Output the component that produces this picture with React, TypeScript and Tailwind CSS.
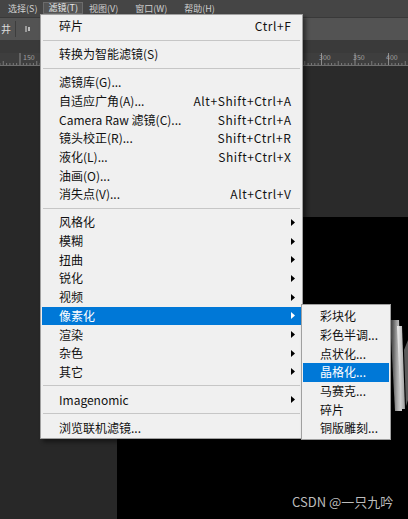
import React from "react";

type Item =
  | { kind: "sep" }
  | { kind: "item"; label: string; shortcut?: string; sub?: boolean; active?: boolean };

const FONT = { fontFamily: '"Noto Sans CJK SC", "Noto Sans", sans-serif' };

const filterMenu: Item[] = [
  { kind: "item", label: "碎片", shortcut: "Ctrl+F" },
  { kind: "sep" },
  { kind: "item", label: "转换为智能滤镜(S)" },
  { kind: "sep" },
  { kind: "item", label: "滤镜库(G)..." },
  { kind: "item", label: "自适应广角(A)...", shortcut: "Alt+Shift+Ctrl+A" },
  { kind: "item", label: "Camera Raw 滤镜(C)...", shortcut: "Shift+Ctrl+A" },
  { kind: "item", label: "镜头校正(R)...", shortcut: "Shift+Ctrl+R" },
  { kind: "item", label: "液化(L)...", shortcut: "Shift+Ctrl+X" },
  { kind: "item", label: "油画(O)..." },
  { kind: "item", label: "消失点(V)...", shortcut: "Alt+Ctrl+V" },
  { kind: "sep" },
  { kind: "item", label: "风格化", sub: true },
  { kind: "item", label: "模糊", sub: true },
  { kind: "item", label: "扭曲", sub: true },
  { kind: "item", label: "锐化", sub: true },
  { kind: "item", label: "视频", sub: true },
  { kind: "item", label: "像素化", sub: true, active: true },
  { kind: "item", label: "渲染", sub: true },
  { kind: "item", label: "杂色", sub: true },
  { kind: "item", label: "其它", sub: true },
  { kind: "sep" },
  { kind: "item", label: "Imagenomic", sub: true },
  { kind: "sep" },
  { kind: "item", label: "浏览联机滤镜..." },
];

const pixelateMenu = ["彩块化", "彩色半调...", "点状化...", "晶格化...", "马赛克...", "碎片", "铜版雕刻..."];

function Arrow({ white }: { white?: boolean }) {
  return (
    <svg width="4" height="7" viewBox="0 0 4 7" className="shrink-0">
      <path d="M0 0 L4 3.5 L0 7 Z" fill={white ? "#ffffff" : "#000000"} />
    </svg>
  );
}

function Ruler() {
  const ticks = [];
  for (let i = 0; i < 130; i++) {
    const x = 0.5 + i * 3.35;
    const major = i % 10 === 0;
    const mid = i % 5 === 0;
    const h = major ? 13 : mid ? 5 : 3;
    ticks.push(<line key={i} x1={x} x2={x} y1={13 - h} y2={13} stroke={major ? "#8c8c8c" : "#7a7a7a"} strokeWidth="1" />);
  }
  return (
    <svg width="408" height="13" className="block">
      <g transform="translate(-14 0)">{ticks}</g>
      <line x1="0" x2="408" y1="12.5" y2="12.5" stroke="#6e6e6e" />
    </svg>
  );
}

export default function App() {
  return (
    <div className="relative w-[408px] h-[519px] overflow-hidden bg-[#282828] select-none" style={FONT}>
      {/* menu bar */}
      <div className="h-[17px] bg-[#454545] flex items-center pl-[3px] gap-[1px] text-[9px] text-[#cfcfcf] border-b border-[#393939] box-content">
        <span className="px-[5px]">选择(S)</span>
        <span className="px-[4px] h-[12px] mt-[-2px] flex items-center border border-[#6c6c6c] bg-[#545454] text-[#e6e6e6]">滤镜(T)</span>
        <span className="px-[5px]">视图(V)</span>
        <span className="px-[5px] ml-[6px]">窗口(W)</span>
        <span className="px-[5px] ml-[6px]">帮助(H)</span>
      </div>

      {/* options bar */}
      <div className="h-[22px] bg-[#535353] flex items-center">
        <span className="text-[10px] text-[#dcdcdc] ml-[1px] leading-none">井</span>
        <div className="w-px h-[16px] bg-[#3d3d3d] ml-[4px]" />
        <div className="ml-[9px] flex items-center gap-[1px]">
          <div className="w-[2px] h-[6px] border border-[#9a9a9a]" />
          <div className="w-[2px] h-[4px] bg-[#bdbdbd]" />
        </div>
      </div>

      {/* tab bar */}
      <div className="h-[13px] bg-[#3a3a3a]" />

      {/* ruler */}
      <div className="relative h-[13px] bg-[#3e3e3e]">
        <Ruler />
        <span className="absolute left-[23px] top-[1px] text-[7px] leading-none text-[#a0a0a0]">150</span>
        <span className="absolute left-[319px] top-[1px] text-[7px] leading-none text-[#a0a0a0]">300</span>
        <span className="absolute left-[353px] top-[1px] text-[7px] leading-none text-[#a0a0a0]">350</span>
        <span className="absolute left-[386px] top-[1px] text-[7px] leading-none text-[#a0a0a0]">400</span>
      </div>

      {/* canvas area */}
      <div className="flex h-[454px]">
        <div className="w-[117px] bg-[#282828]" />
        <div className="flex-1 flex flex-col">
          <div className="h-[153px] bg-[#2a2a2a]" />
          <div className="flex-1 bg-black flex justify-end">
            <svg width="20" height="200" viewBox="0 0 20 200" className="mt-[103px]">
              <defs>
                <linearGradient id="g1" x1="0" x2="1">
                  <stop offset="0" stopColor="#6a6a6a" />
                  <stop offset="1" stopColor="#d8d8d8" />
                </linearGradient>
                <linearGradient id="g2" x1="0" x2="1">
                  <stop offset="0" stopColor="#f4f4f4" />
                  <stop offset="1" stopColor="#9a9a9a" />
                </linearGradient>
              </defs>
              <polygon points="2,0 11,0 14,91 7,91" fill="url(#g1)" />
              <polygon points="9,6 14,6 17,89 13,89" fill="url(#g2)" />
              <polygon points="16,30 20,20 20,80 18,86" fill="#5c5c5c" />
            </svg>
          </div>
        </div>
      </div>

      {/* filter dropdown */}
      <div className="absolute left-[40px] top-[14px] w-[263px] bg-[#f0f0f0] border border-[#a0a0a0] px-[1px] pt-[2px] pb-[1px] shadow-[3px_3px_4px_rgba(0,0,0,0.45)] text-[12px] text-[#111]">
        {filterMenu.map((it, i) =>
          it.kind === "sep" ? (
            <div key={i} className="h-[9.3px] flex items-center px-[1px]">
              <div className="w-full h-px bg-[#c6c6c6]" />
            </div>
          ) : (
            <div
              key={i}
              className={`h-[18.7px] flex items-center pl-[17px] ${it.sub ? "pr-[6px]" : "pr-[10px]"} ${
                it.active ? "bg-[#0078d7] text-white" : ""
              }`}
            >
              <span className="flex-1 whitespace-nowrap">{it.label}</span>
              {it.shortcut && (
                <span className="whitespace-nowrap tracking-[0.6px] mr-[-0.6px]">{it.shortcut}</span>
              )}
              {it.sub && <Arrow white={it.active} />}
            </div>
          )
        )}
      </div>

      {/* pixelate submenu */}
      <div className="absolute left-[301px] top-[304px] w-[90px] bg-[#f0f0f0] border border-[#a0a0a0] px-[1px] pt-[2px] pb-[1px] shadow-[3px_3px_4px_rgba(0,0,0,0.45)] text-[12px] text-[#111]">
        {pixelateMenu.map((label) => (
          <div
            key={label}
            className={`h-[18.7px] flex items-center pl-[17px] whitespace-nowrap ${
              label === "晶格化..." ? "bg-[#0078d7] text-white" : ""
            }`}
          >
            {label}
          </div>
        ))}
      </div>

      {/* watermark */}
      <div className="absolute left-[292px] top-[493px] text-[13px] leading-[18px] text-[#bdbdbd] whitespace-nowrap">
        CSDN @一只九吟
      </div>
    </div>
  );
}
